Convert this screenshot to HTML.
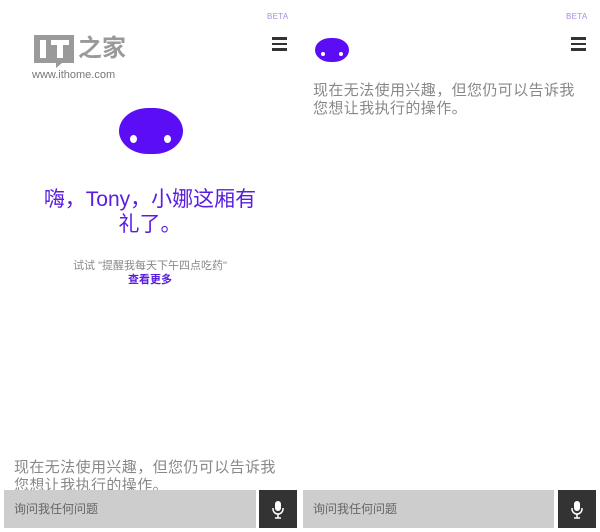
<!DOCTYPE html>
<html><head><meta charset="utf-8"><style>
*{margin:0;padding:0;box-sizing:border-box}
body{width:600px;height:532px;background:#fff;position:relative;overflow:hidden;font-family:"Liberation Sans","Noto Sans CJK SC",sans-serif}
.a{position:absolute}
.beta{font-size:8px;color:#a98de0;letter-spacing:.3px}
.hb{width:15px;height:14px}
.hb i{display:block;height:2.5px;background:#333;margin-bottom:3px}
.blob{background:#5b0df5;border-radius:50%/55%}
.eye{position:absolute;background:#fff;border-radius:50%}
.gray{color:#888}
.msg{font-size:15px;line-height:18px;letter-spacing:0.4px;white-space:nowrap}
</style></head><body>
<div class="a beta" style="left:267px;top:12px">BETA</div>
<div class="a beta" style="left:566px;top:12px">BETA</div>
<div class="a hb" style="left:272px;top:37px"><i></i><i></i><i></i></div>
<div class="a hb" style="left:571px;top:37px"><i></i><i></i><i></i></div>
<div class="a" style="left:34px;top:35px;width:40px;height:28px;background:#9a9a9a"></div>
<div class="a" style="left:40px;top:40px;width:6px;height:18px;background:#fff"></div>
<div class="a" style="left:51px;top:40px;width:18px;height:5px;background:#fff"></div>
<div class="a" style="left:57px;top:40px;width:6px;height:18px;background:#fff"></div>
<div class="a" style="left:56px;top:63px;width:0;height:0;border-left:6px solid #9a9a9a;border-bottom:5px solid transparent"></div>
<div class="a" style="left:78px;top:34px;font-size:24px;font-weight:bold;color:#999;line-height:30px">之家</div>
<div class="a" style="left:32px;top:69px;font-size:11px;color:#777">www.ithome.com</div>
<div class="a blob" style="left:119px;top:108px;width:64px;height:46px"><div class="eye" style="left:11px;top:27px;width:7px;height:8px"></div><div class="eye" style="left:45px;top:27px;width:7px;height:8px"></div></div>
<div class="a" style="left:20px;top:187px;width:260px;text-align:center;font-size:21px;line-height:25px;color:#5a1ee0">嗨，Tony，小娜这厢有<br>礼了。</div>
<div class="a gray" style="left:0;top:257px;width:300px;text-align:center;font-size:11px">试试 "提醒我每天下午四点吃药"</div>
<div class="a" style="left:0;top:271px;width:300px;text-align:center;font-size:11px;font-weight:bold;color:#5a1ee0">查看更多</div>
<div class="a gray msg" style="left:14px;top:459px;width:286px;height:31px;overflow:hidden">现在无法使用兴趣，但您仍可以告诉我<br>您想让我执行的操作。</div>
<div class="a blob" style="left:315px;top:38px;width:34px;height:24px"><div class="eye" style="left:6px;top:14px;width:4px;height:4px"></div><div class="eye" style="left:24px;top:14px;width:4px;height:4px"></div></div>
<div class="a gray msg" style="left:313px;top:82px">现在无法使用兴趣，但您仍可以告诉我<br>您想让我执行的操作。</div>
<div class="a" style="left:4px;top:490px;width:252px;height:38px;background:#cdcdcd;font-size:12px;color:#666;line-height:38px;padding-left:10px">询问我任何问题</div>
<div class="a" style="left:259px;top:490px;width:38px;height:38px;background:#333"></div>
<div class="a" style="left:303px;top:490px;width:251px;height:38px;background:#cdcdcd;font-size:12px;color:#666;line-height:38px;padding-left:10px">询问我任何问题</div>
<div class="a" style="left:558px;top:490px;width:38px;height:38px;background:#333"></div>
<svg class="a" style="left:270px;top:500px" width="16" height="20" viewBox="0 0 16 20"><rect x="5" y="1" width="6" height="10" rx="3" fill="#fff"/><path d="M3 8v1a5 5 0 0 0 10 0V8M8 14v4M5 18h6" stroke="#fff" stroke-width="1.5" fill="none"/></svg>
<svg class="a" style="left:569px;top:500px" width="16" height="20" viewBox="0 0 16 20"><rect x="5" y="1" width="6" height="10" rx="3" fill="#fff"/><path d="M3 8v1a5 5 0 0 0 10 0V8M8 14v4M5 18h6" stroke="#fff" stroke-width="1.5" fill="none"/></svg>
</body></html>
